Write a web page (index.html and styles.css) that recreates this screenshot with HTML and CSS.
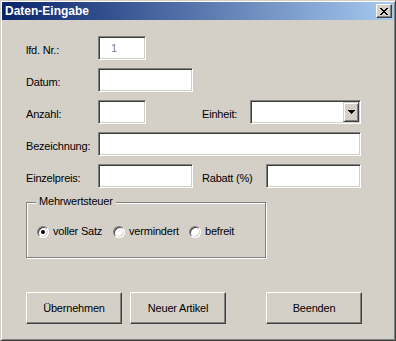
FILE: index.html
```html
<!DOCTYPE html>
<html lang="de">

<head>
  <meta charset="UTF-8">
  <title>Daten-Eingabe</title>
  <link rel="stylesheet" href="styles.css">
</head>

<body>
  <div class="window">
    <div class="titlebar">
      <span class="title">Daten-Eingabe</span>
      <button class="close" title="Schließen">
        <svg width="8" height="7" viewBox="0 0 8 7" shape-rendering="crispEdges">
          <path d="M0 0h2v1H0z M6 0h2v1H6z M1 1h2v1H1z M5 1h2v1H5z M2 2h4v1H2z M3 3h2v1H3z M2 4h4v1H2z M1 5h2v1H1z M5 5h2v1H5z M0 6h2v1H0z M6 6h2v1H6z" fill="#000" />
        </svg>
      </button>
    </div>

    <div class="form">
      <div class="row">
        <label class="lbl">lfd. Nr.:</label>
        <input class="field w-small nr" type="text" value="1" readonly>
      </div>

      <div class="row">
        <label class="lbl">Datum:</label>
        <input class="field w-mid" type="text">
      </div>

      <div class="row">
        <label class="lbl">Anzahl:</label>
        <input class="field w-small" type="text">
        <label class="lbl lbl-einheit">Einheit:</label>
        <div class="field combo">
          <span class="drop">
            <svg width="7" height="4" viewBox="0 0 7 4" shape-rendering="crispEdges">
              <path d="M0 0h7v1H0z M1 1h5v1H1z M2 2h3v1H2z M3 3h1v1H3z" fill="#000" />
            </svg>
          </span>
        </div>
      </div>

      <div class="row">
        <label class="lbl">Bezeichnung:</label>
        <input class="field w-wide" type="text">
      </div>

      <div class="row">
        <label class="lbl">Einzelpreis:</label>
        <input class="field w-mid" type="text">
        <label class="lbl lbl-rabatt">Rabatt (%)</label>
        <input class="field w-mid" type="text">
      </div>

      <div class="group">
        <span class="legend">Mehrwertsteuer</span>
        <div class="options">
          <span class="option"><span class="radio checked"></span>voller Satz</span>
          <span class="option"><span class="radio"></span>vermindert</span>
          <span class="option"><span class="radio"></span>befreit</span>
        </div>
      </div>

      <div class="buttons">
        <button class="btn">Übernehmen</button>
        <button class="btn">Neuer Artikel</button>
        <button class="btn btn-end">Beenden</button>
      </div>
    </div>
  </div>
</body>

</html>
```

FILE: styles.css
```css
body {
  margin: 0;
  background: #d4d0c8;
  font-family: 'Liberation Sans', Arial, sans-serif;
  font-size: 11px;
  color: #000;
}

/* Fensterrahmen im klassischen Stil */
.window {
  box-sizing: border-box;
  width: 396px;
  height: 341px;
  padding: 1px;
  background: #d4d0c8;
  border: 1px solid;
  border-color: #d4d0c8 #404040 #404040 #d4d0c8;
  box-shadow: inset 1px 1px 0 #fff, inset -1px -1px 0 #808080;
}

.titlebar {
  display: flex;
  align-items: center;
  justify-content: space-between;
  height: 18px;
  padding-left: 3px;
  background: linear-gradient(to right, #0a246a, #a6caf0);
}

.title {
  color: #fff;
  font-weight: bold;
  font-size: 12px;
}

.close {
  box-sizing: border-box;
  display: flex;
  align-items: center;
  justify-content: center;
  width: 16px;
  height: 14px;
  margin-right: 2px;
  padding: 0;
  background: #d4d0c8;
  border: 1px solid;
  border-color: #fff #404040 #404040 #fff;
  box-shadow: inset -1px -1px 0 #808080;
}

.form {
  padding: 16px 0 0 24px;
}

.row {
  display: flex;
  align-items: flex-start;
  height: 24px;
  margin-bottom: 8px;
}

.lbl {
  width: 72px;
  padding-top: 8px;
  line-height: 13px;
  letter-spacing: -0.2px;
  flex-shrink: 0;
}

.lbl-einheit {
  width: 48px;
  margin-left: 56px;
}

.lbl-rabatt {
  width: 64px;
  margin-left: 9px;
}

.field {
  box-sizing: border-box;
  height: 24px;
  margin: 0;
  padding: 0 4px;
  background: #fff;
  border: 1px solid;
  border-color: #808080 #fff #fff #808080;
  box-shadow: inset 1px 1px 0 #404040, inset -1px -1px 0 #d4d0c8;
  font-family: inherit;
  font-size: 11px;
  outline: none;
}

.w-small {
  width: 48px;
}

.w-mid {
  width: 95px;
}

.w-wide {
  width: 263px;
}

.nr {
  color: #808080;
  padding-left: 12px;
}

.combo {
  display: flex;
  justify-content: flex-end;
  width: 111px;
  padding: 1px;
}

.drop {
  box-sizing: border-box;
  display: flex;
  align-items: center;
  justify-content: center;
  width: 16px;
  height: 20px;
  background: #d4d0c8;
  border: 1px solid;
  border-color: #d4d0c8 #404040 #404040 #d4d0c8;
  box-shadow: inset 1px 1px 0 #fff, inset -1px -1px 0 #808080;
}

/* Rahmen "Mehrwertsteuer" */
.group {
  position: relative;
  box-sizing: border-box;
  width: 240px;
  height: 56px;
  margin-top: 14px;
  border: 1px solid #808080;
  box-shadow: inset 1px 1px 0 #fff, 1px 1px 0 #fff;
}

.legend {
  position: absolute;
  top: -8px;
  left: 9px;
  padding: 0 3px;
  line-height: 13px;
  background: #d4d0c8;
  letter-spacing: -0.2px;
}

.options {
  display: flex;
  align-items: center;
  padding: 22px 0 0 10px;
  line-height: 13px;
  letter-spacing: -0.2px;
}

.option {
  display: flex;
  align-items: center;
  width: 80px;
}

.radio {
  position: relative;
  box-sizing: border-box;
  width: 12px;
  height: 12px;
  margin-right: 4px;
  background: #fff;
  border: 1px solid;
  border-color: #808080 #fff #fff #808080;
  border-radius: 50%;
  box-shadow: inset 1px 1px 0 #404040, inset -1px -1px 0 #d4d0c8;
}

.radio.checked::after {
  content: "";
  position: absolute;
  top: 3px;
  left: 3px;
  width: 4px;
  height: 4px;
  border-radius: 50%;
  background: #000;
}

.buttons {
  display: flex;
  gap: 8px;
  margin-top: 34px;
}

.btn {
  box-sizing: border-box;
  width: 96px;
  height: 32px;
  padding: 0;
  background: #d4d0c8;
  border: 1px solid;
  border-color: #fff #404040 #404040 #fff;
  box-shadow: inset -1px -1px 0 #808080, inset 1px 1px 0 #d4d0c8;
  font-family: inherit;
  font-size: 11px;
  letter-spacing: -0.2px;
  color: #000;
}

.btn-end {
  margin-left: 32px;
}
```
